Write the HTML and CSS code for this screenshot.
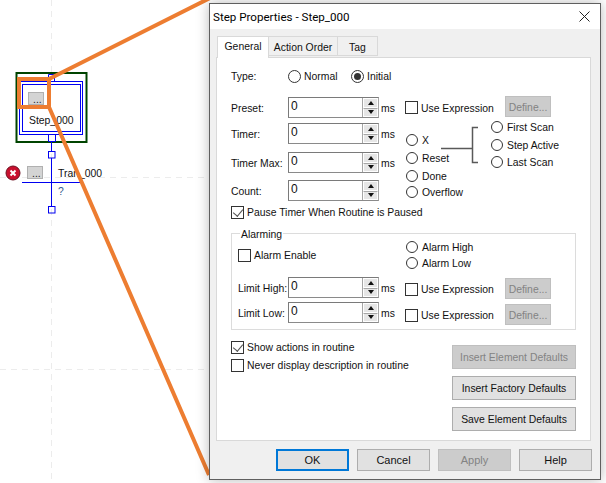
FILE: index.html
```html
<!DOCTYPE html>
<html lang="en">
<head>
<meta charset="utf-8">
<title>Step Properties - Step_000</title>
<link rel="stylesheet" href="styles.css">
</head>
<body>
<svg class="canvas" width="606" height="483" viewBox="0 0 606 483">
  <g class="guide">
    <path d="M51.5 0V483M0 177.5H210M0 369.5H210"/>
  </g>
  <rect class="green" x="16.5" y="73" width="70" height="69"/>
  <path class="blue" d="M48.5 81V74.500H54.500V81M48.500 135V141.500H55.500V135"/>
  <rect class="blue" x="19.500" y="81.500" width="63" height="53"/>
  <rect class="blue" x="22.500" y="84.500" width="58" height="47"/>
  <rect class="mini" x="28.500" y="92.500" width="15" height="12"/>
  <text class="mini-t" x="33" y="103">...</text>
  <text class="node" x="29" y="124">Step_000</text>
  <path class="blue" d="M51.500 142V151M51.500 158V206M22 182.500H80"/>
  <rect class="blue" x="48.500" y="151.500" width="6.500" height="6.500"/>
  <rect class="blue" x="48.500" y="206.500" width="6.500" height="6.500"/>
  <rect class="mini" x="27.500" y="166.500" width="15" height="12"/>
  <text class="mini-t" x="32" y="177">...</text>
  <text class="node" x="58" y="177">Tran_000</text>
  <text class="node q" x="58" y="195">?</text>
  <circle class="err" cx="13" cy="173" r="7"/>
  <path class="err-x" d="M10.500 170.500L15.500 175.500M15.500 170.500L10.500 175.500"/>
  <path class="orange" d="M19 79H49V107H19ZM49 79L212 -3M49 107L209 475"/>
</svg>

<div class="dialog">
  <div class="titlebar">
    <span class="title">Step Properties - Step_000</span>
    <svg class="close" width="11" height="11" viewBox="0 0 11 11"><path d="M.5 .5L10.500 10.500M10.500 .5L.5 10.500"/></svg>
  </div>
  <div class="body">
    <div class="tabs">
      <span class="tab active">General</span>
      <span class="tab second">Action Order</span>
      <span class="tab third">Tag</span>
    </div>
    <div class="panel">
      <div class="type-row">
        <span class="type-label">Type:</span>
        <label class="opt normal"><i class="radio big"></i>Normal</label>
        <label class="opt"><i class="radio big on"></i>Initial</label>
      </div>

      <div class="main">
        <div class="left-col">
          <div class="spin-row"><span class="lbl">Preset:</span><div class="spin"><span class="val">0</span><div class="arrows"><b class="up"></b><b class="down"></b></div></div><span class="unit">ms</span></div>
          <div class="spin-row gap5"><span class="lbl">Timer:</span><div class="spin"><span class="val">0</span><div class="arrows"><b class="up"></b><b class="down"></b></div></div><span class="unit">ms</span></div>
          <div class="spin-row gap8"><span class="lbl">Timer Max:</span><div class="spin"><span class="val">0</span><div class="arrows"><b class="up"></b><b class="down"></b></div></div><span class="unit">ms</span></div>
          <div class="spin-row gap7"><span class="lbl">Count:</span><div class="spin"><span class="val">0</span><div class="arrows"><b class="up"></b><b class="down"></b></div></div></div>
        </div>
        <div class="right-col">
          <div class="use-row"><label class="opt use"><i class="check"></i>Use Expression</label><span class="btn define disabled">Define...</span></div>
          <div class="scan">
            <div class="bits">
              <label class="opt h18"><i class="radio"></i>X</label>
              <label class="opt h18"><i class="radio"></i>Reset</label>
              <label class="opt"><i class="radio"></i>Done</label>
              <label class="opt"><i class="radio"></i>Overflow</label>
            </div>
            <svg class="bracket" width="38" height="38" viewBox="0 0 38 38"><path d="M0 22.500H31.500M37 1.500H31.500V36.500H37"/></svg>
            <div class="scans">
              <label class="opt h18"><i class="radio"></i>First Scan</label>
              <label class="opt h17"><i class="radio"></i>Step Active</label>
              <label class="opt"><i class="radio"></i>Last Scan</label>
            </div>
          </div>
        </div>
      </div>

      <label class="opt pause"><i class="check checked"></i>Pause Timer When Routine is Paused</label>

      <div class="group">
        <span class="legend">Alarming</span>
        <div class="alarm-top">
          <label class="opt enable"><i class="check"></i>Alarm Enable</label>
          <div class="alarm-radios">
            <label class="opt"><i class="radio"></i>Alarm High</label>
            <label class="opt"><i class="radio"></i>Alarm Low</label>
          </div>
        </div>
        <div class="limit first">
          <div class="spin-row limit-left"><span class="lbl short">Limit High:</span><div class="spin"><span class="val">0</span><div class="arrows"><b class="up"></b><b class="down"></b></div></div><span class="unit">ms</span></div>
          <div class="use-row nudge"><label class="opt use"><i class="check"></i>Use Expression</label><span class="btn define disabled">Define...</span></div>
        </div>
        <div class="limit second-limit">
          <div class="spin-row limit-left"><span class="lbl short">Limit Low:</span><div class="spin"><span class="val">0</span><div class="arrows"><b class="up"></b><b class="down"></b></div></div><span class="unit">ms</span></div>
          <div class="use-row nudge2"><label class="opt use"><i class="check"></i>Use Expression</label><span class="btn define disabled">Define...</span></div>
        </div>
      </div>

      <div class="lower">
        <div class="lower-checks">
          <label class="opt h18"><i class="check checked"></i>Show actions in routine</label>
          <label class="opt"><i class="check"></i>Never display description in routine</label>
        </div>
        <div class="defaults">
          <span class="btn wide disabled">Insert Element Defaults</span>
          <span class="btn wide">Insert Factory Defaults</span>
          <span class="btn wide">Save Element Defaults</span>
        </div>
      </div>
    </div>
    <div class="actions">
      <span class="btn act focus">OK</span>
      <span class="btn act">Cancel</span>
      <span class="btn act disabled">Apply</span>
      <span class="btn act">Help</span>
    </div>
  </div>
</div>
</body>
</html>
```

FILE: styles.css
```css
* { box-sizing: border-box; }
html, body { margin: 0; padding: 0; width: 606px; height: 483px; overflow: hidden; background: #fff; }
body { position: relative; font: 10.4px/16px "Liberation Sans", Arial, sans-serif; color: #111; }

.canvas { position: absolute; left: 0; top: 0; }
.canvas text { font: 10.4px "Liberation Sans", Arial, sans-serif; fill: #111; }
.guide path { fill: none; stroke: #ececec; stroke-dasharray: 6 5; }
.green { fill: #fff; stroke: #004400; stroke-width: 2; }
.blue { fill: none; stroke: #0000f0; stroke-width: 1; }
.mini { fill: #d4d4d4; stroke: #b0b0b0; }
.canvas .mini-t { fill: #222; }
.canvas .q { fill: #315a8c; }
.err { fill: #c8102e; stroke: #6e1020; stroke-width: 1; }
.err-x { stroke: #fff; stroke-width: 2; fill: none; }
.orange { fill: none; stroke: #ed7d31; stroke-width: 4; }

.dialog {
  position: absolute; left: 209px; top: 3px; width: 392px; height: 477px;
  background: #f0f0f0; border: 1px solid #5f5f5f; box-shadow: 0 0 12px rgba(0, 0, 0, .28);
  display: flex; flex-direction: column;
}
.titlebar { height: 25px; background: #fff; display: flex; align-items: center; justify-content: space-between; padding: 0 10px 0 3px; flex: none; }
.title { font: 11.6px/16px Roboto, "Noto Sans", sans-serif; color: #000; }
.close path { stroke: #222; stroke-width: 1; fill: none; }

.body { flex: 1; padding: 7px 8px 0 6px; }
.tabs { display: flex; align-items: flex-end; height: 21px; padding-left: 1px; position: relative; z-index: 1; }
.tab { height: 20px; background: #f0f0f0; border: 1px solid #d9d9d9; border-left: 0; line-height: 22px; text-align: center; margin-bottom: 1px; }
.tab.active { height: 22px; width: 52px; background: #fff; border-left: 1px solid #d9d9d9; border-bottom: 0; margin-bottom: -1px; line-height: 19px; }
.second { width: 69px; }
.third { width: 40px; }

.panel { width: 375px; height: 384px; background: #fff; border: 1px solid #d9d9d9; padding: 10px 14px 0; }

.opt { display: flex; align-items: center; height: 16px; white-space: nowrap; padding-top: 2px; }
.radio { width: 12px; height: 12px; border-radius: 50%; border: 1px solid #333; background: #fff; margin: -2px 4px 0 0; flex: none; display: flex; align-items: center; justify-content: center; }
.radio.big { width: 13px; height: 13px; margin-right: 3px; }
.radio.on::after { content: ""; width: 7px; height: 7px; border-radius: 50%; background: #333; }
.check { width: 13px; height: 13px; border: 1px solid #333; background: #fff; margin: -2px 3px 0 0; flex: none; position: relative; }
.check.checked::after { content: ""; position: absolute; left: 3px; top: 0; width: 5px; height: 8px; border: solid #555; border-width: 0 1.500px 1.500px 0; transform: rotate(40deg); }

.type-row { display: flex; align-items: center; height: 16px; }
.type-label { width: 57px; padding-top: 2px; }
.normal { width: 63px; }

.main { display: flex; margin-top: 12px; }
.left-col { width: 174px; flex: none; padding-top: 1px; }
.spin-row { display: flex; align-items: center; height: 21px; }
.gap5 { margin-top: 5px; }
.gap8 { margin-top: 8px; }
.gap7 { margin-top: 7px; }
.lbl { width: 57px; flex: none; white-space: nowrap; padding-top: 2px; }
.short { width: 50px; }
.spin { width: 91px; height: 21px; display: flex; border: 1px solid #7a7a7a; border-right-color: #a6a6a6; border-bottom-color: #8a8a8a; background: #fff; flex: none; }
.val { flex: 1; padding-left: 2px; line-height: 16px; font-size: 12px; color: #111; }
.arrows { width: 16px; display: flex; flex-direction: column; flex: none; border-left: 1px solid #a6a6a6; }
.arrows b { flex: 1; background: #e6e6e6; display: flex; align-items: center; justify-content: center; border: 1px solid #fff; }
.arrows .down { border-top-color: #a6a6a6; }
.up::after { content: ""; border: 3.500px solid transparent; border-top: 0; border-bottom: 4px solid #111; }
.down::after { content: ""; border: 3.500px solid transparent; border-bottom: 0; border-top: 4px solid #111; }
.unit { margin-left: 2px; padding-top: 2px; }

.right-col { flex: 1; }
.use-row { display: flex; align-items: center; height: 21px; }
.use { width: 100px; flex: none; padding-top: 4px; }
.use .check { margin-top: -2px; }
.limit .use { padding-top: 2px; }
.limit .use .check { margin-top: 0; }
.btn { display: flex; align-items: center; justify-content: center; background: #e1e1e1; border: 1px solid #adadad; white-space: nowrap; padding-top: 2px; }
.btn.disabled { background: #ccc; border-color: #bfbfbf; color: #838383; }
.define { width: 46px; height: 21px; }

.scan { display: flex; margin-top: 2px; padding-left: 1px; }
.bits { width: 35px; flex: none; padding-top: 13px; }
.h18 { margin-bottom: 2px; }
.h17 { margin-bottom: 1px; }
.bracket { margin-top: 7px; flex: none; }
.bracket path { fill: none; stroke: #595959; stroke-width: 1.500; }
.scans { margin-left: 12px; }

.pause { margin-top: 3px; }
.group { position: relative; margin-top: 13px; height: 97px; border: 1px solid #dcdcdc; padding: 5px 6px 0; }
.legend { position: absolute; left: 8px; top: -6px; background: #fff; padding: 0 1px; line-height: 13px; }
.alarm-top { display: flex; height: 32px; }
.enable { width: 168px; flex: none; margin-top: 8px; }
.alarm-radios { display: flex; flex-direction: column; }
.limit { display: flex; }
.first { margin-top: 6px; }
.second-limit { margin-top: 3px; }
.limit-left { width: 167px; flex: none; }
.nudge { margin-top: 1px; }
.nudge2 { margin-top: 2px; }

.lower { display: flex; justify-content: space-between; margin-top: 9px; }
.defaults { display: flex; flex-direction: column; gap: 7px; margin-top: 6px; }
.wide { width: 124px; height: 24px; }

.actions { display: flex; justify-content: flex-end; gap: 8px; margin-top: 8px; width: 376px; }
.act { width: 73px; height: 22px; font-size: 11px; padding-top: 0; }
.focus { border: 2px solid #0078d7; }
```
